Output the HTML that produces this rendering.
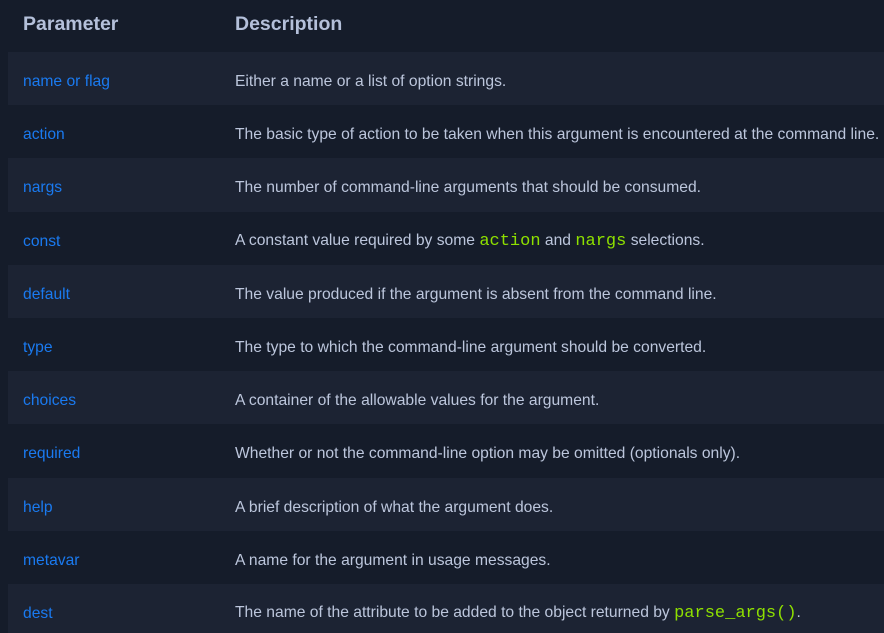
<!DOCTYPE html>
<html><head><meta charset="utf-8"><style>
html,body{margin:0;padding:0;background:#151c2a;width:884px;height:633px;overflow:hidden}
body{font-family:"Liberation Sans",sans-serif;font-size:15.65px;color:#bcc6dc}
.r{position:relative;height:53.2px;margin-left:8px;display:flex;align-items:center;padding-top:7px;box-sizing:border-box}
.r.s{background:#1c2333}
.h{height:52px;font-weight:bold;font-size:19.5px;color:#b4c0da;padding-top:0;padding-bottom:4px}
.a{position:absolute;left:15px}
.b{position:absolute;left:227px;white-space:nowrap}
.p{color:#1a7af0}
code{font-family:"Liberation Mono",monospace;color:#8ee000;font-size:17px}
</style></head><body>
<div class="r h"><span class="a">Parameter</span><span class="b">Description</span></div>
<div class="r s"><span class="a p">name or flag</span><span class="b">Either a name or a list of option strings.</span></div>
<div class="r"><span class="a p">action</span><span class="b">The basic type of action to be taken when this argument is encountered at the command line.</span></div>
<div class="r s"><span class="a p">nargs</span><span class="b">The number of command-line arguments that should be consumed.</span></div>
<div class="r"><span class="a p">const</span><span class="b">A constant value required by some <code>action</code> and <code>nargs</code> selections.</span></div>
<div class="r s"><span class="a p">default</span><span class="b">The value produced if the argument is absent from the command line.</span></div>
<div class="r"><span class="a p">type</span><span class="b">The type to which the command-line argument should be converted.</span></div>
<div class="r s"><span class="a p">choices</span><span class="b">A container of the allowable values for the argument.</span></div>
<div class="r"><span class="a p">required</span><span class="b">Whether or not the command-line option may be omitted (optionals only).</span></div>
<div class="r s"><span class="a p">help</span><span class="b">A brief description of what the argument does.</span></div>
<div class="r"><span class="a p">metavar</span><span class="b">A name for the argument in usage messages.</span></div>
<div class="r s"><span class="a p">dest</span><span class="b">The name of the attribute to be added to the object returned by <code>parse_args()</code>.</span></div>
</body></html>
